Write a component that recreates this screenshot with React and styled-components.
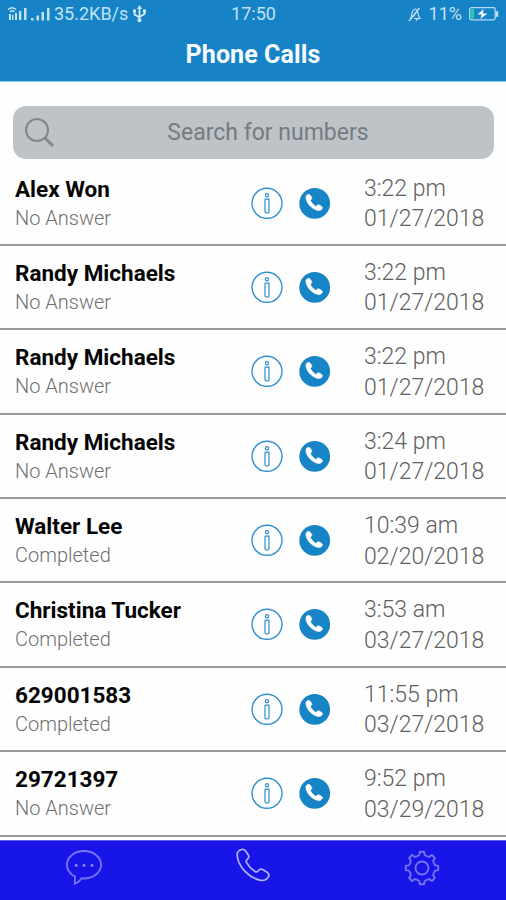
import styled, { createGlobalStyle } from "styled-components";

const GlobalStyle = createGlobalStyle`
  * {
    box-sizing: border-box;
  }

  body {
    margin: 0;
    background-color: #fff;
    font-family: Roboto, "Liberation Sans", sans-serif;
  }
`;

const Screen = styled.div`
  width: 506px;
  height: 900px;
  display: flex;
  flex-direction: column;
  overflow: hidden;
  background-color: #fefefe;
`;

const Top = styled.header`
  height: 82px;
  flex-shrink: 0;
  background-color: #1583c5;
  border-bottom: 1px solid #8fc5e6;
`;

const StatusBar = styled.div`
  height: 28px;
  display: grid;
  grid-template-columns: 1fr auto 1fr;
  align-items: center;
  padding: 0 7px 0 8px;
  color: #c3e2f5;
  font-size: 18px;
  line-height: 28px;
`;

const StatusGroup = styled.div`
  display: flex;
  align-items: center;
  justify-content: ${({ $end }) => ($end ? "flex-end" : "flex-start")};
`;

const StatusText = styled.span`
  font-size: 18px;
  letter-spacing: ${({ $spacing }) => $spacing || "0"};
  margin: ${({ $margin }) => $margin || "0"};
`;

const Title = styled.h1`
  margin: 0;
  height: 53px;
  line-height: 54px;
  text-align: center;
  color: #f8fcff;
  font-size: 25px;
  font-weight: 700;
  letter-spacing: 0.1px;
`;

const SearchBox = styled.div`
  height: 53px;
  flex-shrink: 0;
  margin: 24px 12px 2.5px 13px;
  padding: 0 13px 0 11px;
  border-radius: 13px;
  background-color: #bdc3c7;
  display: flex;
  align-items: center;
`;

const Placeholder = styled.span`
  flex: 1;
  text-align: center;
  padding-right: 1px;
  margin-left: 1px;
  color: #757b80;
  font-size: 23px;
`;

const CallList = styled.div`
  flex-shrink: 0;
  height: 678.5px;
`;

const Row = styled.div`
  height: 84.4px;
  display: grid;
  grid-template-columns: 236px 48px 65px 1fr;
  padding-left: 15px;
  border-bottom: 2px solid #989898;
`;

const Contact = styled.div`
  padding-top: 14px;
`;

const Name = styled.div`
  color: #050505;
  font-size: 22.5px;
  font-weight: 700;
  line-height: 27px;
  white-space: nowrap;
`;

const Status = styled.div`
  margin-top: 1px;
  color: #707070;
  font-size: 20px;
  font-weight: 300;
  line-height: 28px;
`;

const IconCell = styled.div`
  padding-top: 25px;
  height: 60px;

  svg {
    display: block;
  }
`;

const When = styled.div`
  padding-top: 12px;
  color: #606060;
  font-size: 23px;
  font-weight: 300;
  line-height: 30.5px;
`;

const TabBar = styled.nav`
  height: 60px;
  flex-shrink: 0;
  display: grid;
  grid-template-columns: repeat(3, 1fr);
  background-color: #1715e7;
  border-top: 1px solid #5d5ce9;
`;

const Tab = styled.div`
  display: flex;
  justify-content: center;
  padding-top: ${({ $top }) => $top || "8px"};
`;

const HANDSET =
  "M7.6 3.2 C5 3.6 3 6 3.3 9.5 C4.5 21 15 31.5 26.5 34.6 C30.5 35.5 34 33.6 35.6 30.7 C36.2 29 35.5 27.6 34 26.5 L29.8 23.8 C28 22.8 26.2 23.2 25 24.8 C24.2 26.1 23 26.6 21.6 25.7 C18.3 23.6 14.8 20 12.9 16.6 C12 15 12.5 14 13.8 13 C15.3 11.8 15.5 10 14.4 8.3 L11.9 4.7 C10.8 3.2 9.3 2.8 7.6 3.2 Z";

const SignalIcon = () => (
  <svg width="44" height="17" viewBox="0 0 44 17" fill="#c3e2f5">
    <path d="M0 3.5 Q4 0 8 3.5 M2 6 Q4 3.5 6.5 6" fill="none" stroke="#c3e2f5" strokeWidth="1.3" />
    <path d="M1 8h2v6H1zM4 9h1.5v5H4zM7 7h2v7H7zM11 5h2.3v9H11zM16 2h2.5v12H16z" />
    <path d="M23 12h2.5v2.5H23zM28.5 9.5H31v5h-2.5zM33.5 6H36v8.5h-2.5zM39 2h2.5v12.5H39z" />
  </svg>
);

const UsbIcon = () => (
  <svg width="15" height="18" viewBox="0 0 15 18" fill="none" stroke="#d5edfa" strokeWidth="1.7">
    <path d="M7.5 3V15M7.5 12.5L2.5 9.5V6M7.5 12L12.5 9V6" />
    <path d="M7.5 0L10 4H5ZM1 4.5h3v3H1zM11 4.5h3v3h-3z" fill="#d5edfa" stroke="none" />
    <circle cx="7.5" cy="15.3" r="2" fill="#d5edfa" stroke="none" />
  </svg>
);

const MuteIcon = () => (
  <svg width="14" height="15" viewBox="0 0 14 15" fill="none" stroke="#c3e2f5" strokeWidth="1.2">
    <path d="M2.5 11.5C4.5 9 2.5 3 7.5 2C11 2.5 9 9 12 11.5H6M8 13.5L10 11.5M11.5 1L1 14" />
    <path d="M5 10L9 4" />
  </svg>
);

const BatteryIcon = () => (
  <svg width="30" height="14" viewBox="0 0 30 14">
    <rect x="0.7" y="0.7" width="25.5" height="12.2" rx="1.8" fill="none" stroke="#b5dcf3" strokeWidth="1.3" />
    <rect x="27" y="4" width="2.2" height="6" rx="1" fill="#c3e2f5" />
    <rect x="2" y="2" width="3.2" height="9.6" fill="#20cfa9" />
    <path d="M14.5 2L8.5 7.5H12.5L11.5 12L18.5 6.4H14.2Z" fill="#eefaff" />
  </svg>
);

const SearchIcon = () => (
  <svg width="31" height="31" viewBox="0 0 31 31" fill="none" stroke="#81868a">
    <circle cx="13" cy="13" r="11" strokeWidth="2" />
    <path d="M20.5 20.5L29 29" strokeWidth="3" />
  </svg>
);

const InfoIcon = () => (
  <svg width="32" height="33" viewBox="0 0 32 33" fill="none" stroke="#2e8fcb">
    <circle cx="16" cy="16.3" r="15" strokeWidth="1.4" />
    <circle cx="16" cy="8.2" r="1.6" strokeWidth="1.2" />
    <path d="M13.8 12.2H18V24.2Q18 26 16 26Q14 26 14 24.2V12.2" strokeWidth="1.2" />
  </svg>
);

const CallIcon = () => (
  <svg width="32" height="33" viewBox="0 0 32 33">
    <circle cx="15.7" cy="16.4" r="15.4" fill="#1684c5" />
    <g transform="translate(5.2 5.8) scale(.51)">
      <path d={HANDSET} fill="#fff" stroke="#fff" />
    </g>
  </svg>
);

const ChatIcon = () => (
  <svg width="36" height="37" viewBox="0 0 36 37" fill="none" stroke="#7775f7" strokeWidth="1.8">
    <path d="M9 27.6C3.8 24.8 1 20.5 1 15.8C1 8 8.5 2 18 2C27.5 2 35 8 35 15.8C35 23.5 27.5 29.5 18 29.5L15.5 29.3C13.5 32.5 11 34.2 8.7 34.6Z" />
    <g fill="#8f8df9" stroke="none">
      <circle cx="10.2" cy="16.5" r="1.4" />
      <circle cx="18" cy="16.5" r="1.4" />
      <circle cx="26" cy="16.5" r="1.4" />
    </g>
  </svg>
);

const PhoneIcon = () => (
  <svg width="38" height="38" viewBox="0 0 39 38" fill="none" stroke="#b1b0fc" strokeWidth="1.8">
    <path d={HANDSET} />
  </svg>
);

// Eight-tooth outline, teeth and gaps joined with short straight segments
const gearPoints = Array.from({ length: 8 }, (_, i) =>
  [
    [-20, 12.8],
    [-11.5, 13.4],
    [-7.5, 16.4],
    [7.5, 16.4],
    [11.5, 13.4],
    [20, 12.8],
  ]
    .map(([offset, r]) => {
      const a = ((i * 45 + offset) * Math.PI) / 180;
      return `${18 + r * Math.sin(a)},${18 - r * Math.cos(a)}`;
    })
    .join(" ")
).join(" ");

const SettingsIcon = () => (
  <svg width="36" height="36" viewBox="0 0 36 36" fill="none" stroke="#7775f7" strokeWidth="1.8" strokeLinejoin="round">
    <polygon points={gearPoints} />
    <circle cx="18" cy="18" r="6.5" />
  </svg>
);

const calls = [
  { name: "Alex Won", status: "No Answer", time: "3:22 pm", date: "01/27/2018" },
  { name: "Randy Michaels", status: "No Answer", time: "3:22 pm", date: "01/27/2018" },
  { name: "Randy Michaels", status: "No Answer", time: "3:22 pm", date: "01/27/2018" },
  { name: "Randy Michaels", status: "No Answer", time: "3:24 pm", date: "01/27/2018" },
  { name: "Walter Lee", status: "Completed", time: "10:39 am", date: "02/20/2018" },
  { name: "Christina Tucker", status: "Completed", time: "3:53 am", date: "03/27/2018" },
  { name: "629001583", status: "Completed", time: "11:55 pm", date: "03/27/2018" },
  { name: "29721397", status: "No Answer", time: "9:52 pm", date: "03/29/2018" },
];

const App = () => (
  <>
    <GlobalStyle />
    <Screen>
      <Top>
        <StatusBar>
          <StatusGroup>
            <SignalIcon />
            <StatusText $margin="0 4px 0 2px">35.2KB/s</StatusText>
            <UsbIcon />
          </StatusGroup>
          <StatusText>17:50</StatusText>
          <StatusGroup $end>
            <MuteIcon />
            <StatusText $margin="0 7px 0 7px">11%</StatusText>
            <BatteryIcon />
          </StatusGroup>
        </StatusBar>
        <Title>Phone Calls</Title>
      </Top>
      <SearchBox>
        <SearchIcon />
        <Placeholder>Search for numbers</Placeholder>
      </SearchBox>
      <CallList>
        {calls.map((call, i) => (
          <Row key={i}>
            <Contact>
              <Name>{call.name}</Name>
              <Status>{call.status}</Status>
            </Contact>
            <IconCell>
              <InfoIcon />
            </IconCell>
            <IconCell>
              <CallIcon />
            </IconCell>
            <When>
              <div>{call.time}</div>
              <div>{call.date}</div>
            </When>
          </Row>
        ))}
      </CallList>
      <TabBar>
        <Tab>
          <ChatIcon />
        </Tab>
        <Tab $top="5px">
          <PhoneIcon />
        </Tab>
        <Tab $top="9px">
          <SettingsIcon />
        </Tab>
      </TabBar>
    </Screen>
  </>
);

export default App;
